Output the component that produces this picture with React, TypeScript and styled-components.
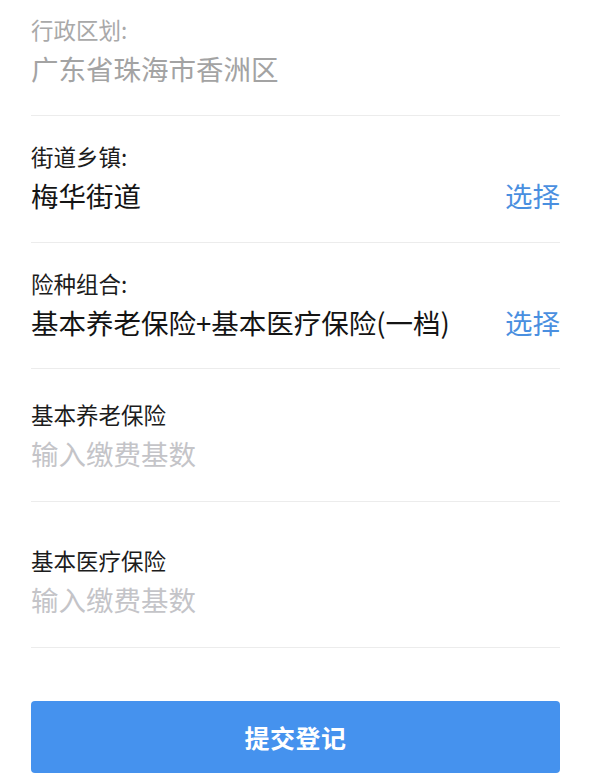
import React from "react";
import styled, { createGlobalStyle } from "styled-components";

const GlobalStyle = createGlobalStyle`
  html, body {
    margin: 0;
    padding: 0;
    background: #fff;
  }
  body {
    font-family: "Noto Sans CJK SC", "Noto Sans", sans-serif;
  }
`;

const Page = styled.div`
  display: flex;
  flex-direction: column;
  padding: 0 30px 0 31px;
  background: #fff;
`;

const Field = styled.div<{ $top: number; $bottom: number }>`
  display: flex;
  flex-direction: column;
  gap: 6px;
  padding: ${(p) => p.$top}px 0 ${(p) => p.$bottom}px;
  border-bottom: 1px solid #ececec;
`;

const Label = styled.div<{ $muted?: boolean }>`
  font-size: 22.5px;
  line-height: 30px;
  color: ${(p) => (p.$muted ? "#a9a9a9" : "#1c1c1c")};
`;

const ValueRow = styled.div`
  display: flex;
  align-items: center;
  justify-content: space-between;
`;

const Value = styled.div<{ $muted?: boolean }>`
  font-size: 27.5px;
  line-height: 36px;
  color: ${(p) => (p.$muted ? "#a3a3a3" : "#141414")};
`;

const Pick = styled.button`
  border: none;
  background: none;
  padding: 0;
  font-family: inherit;
  font-size: 27.5px;
  line-height: 36px;
  color: #4a8fe0;
  cursor: pointer;
`;

const Input = styled.input`
  display: block;
  width: 100%;
  height: 36px;
  padding: 0;
  border: none;
  outline: none;
  font-family: inherit;
  font-size: 27.5px;
  line-height: 36px;
  color: #141414;
  background: transparent;

  &::placeholder {
    color: #c4c4c8;
  }
`;

const SubmitButton = styled.button`
  margin-top: 53px;
  height: 72px;
  border: none;
  border-radius: 4px;
  background: #4592ee;
  color: #fff;
  font-family: inherit;
  font-size: 25px;
  font-weight: 700;
  letter-spacing: 0.5px;
  cursor: pointer;
`;

const App: React.FC = () => {
  return (
    <>
      <GlobalStyle />
      <Page>
        <Field $top={14} $bottom={29}>
          <Label $muted>行政区划:</Label>
          <Value $muted>广东省珠海市香洲区</Value>
        </Field>

        <Field $top={25} $bottom={29}>
          <Label>街道乡镇:</Label>
          <ValueRow>
            <Value>梅华街道</Value>
            <Pick>选择</Pick>
          </ValueRow>
        </Field>

        <Field $top={25} $bottom={28}>
          <Label>险种组合:</Label>
          <ValueRow>
            <Value>基本养老保险+基本医疗保险(一档)</Value>
            <Pick>选择</Pick>
          </ValueRow>
        </Field>

        <Field $top={30} $bottom={30}>
          <Label>基本养老保险</Label>
          <Input placeholder="输入缴费基数" />
        </Field>

        <Field $top={43} $bottom={30}>
          <Label>基本医疗保险</Label>
          <Input placeholder="输入缴费基数" />
        </Field>

        <SubmitButton>提交登记</SubmitButton>
      </Page>
    </>
  );
};

export default App;
